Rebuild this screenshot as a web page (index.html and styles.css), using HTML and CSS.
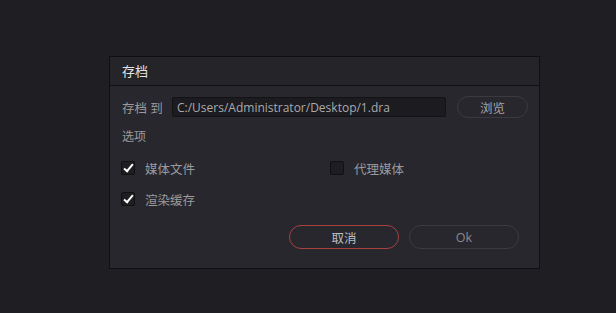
FILE: index.html
```html
<!DOCTYPE html>
<html lang="zh-CN">
<head>
    <meta charset="UTF-8">
    <title>存档</title>
    <link rel="stylesheet" href="styles.css">
</head>
<body>

<div class="dialog">
    <div class="dialog-title">存档</div>
    <div class="dialog-body">
        <div class="path-row">
            <span class="label">存档 到</span>
            <input type="text" class="path-input" value="C:/Users/Administrator/Desktop/1.dra">
            <button class="pill browse">浏览</button>
        </div>

        <div class="section">选项</div>

        <div class="options">
            <label class="option"><span class="box checked"></span>媒体文件</label>
            <label class="option"><span class="box"></span>代理媒体</label>
            <label class="option"><span class="box checked"></span>渲染缓存</label>
        </div>

        <div class="actions">
            <button class="pill cancel">取消</button>
            <button class="pill ok">Ok</button>
        </div>
    </div>
</div>

</body>
</html>
```

FILE: styles.css
```css
body {
    margin: 0;
    padding: 56px 0 0 109px;
    background-color: #1f1e23;
    font-family: "Open Sans", "Noto Sans CJK SC", sans-serif;
    font-size: 12px;
    color: #9b9b9e;
}

.dialog {
    width: 429px;
    height: 211px;
    border: 1px solid #101014;
    background-color: #28272d;
}

.dialog-title {
    height: 28px;
    line-height: 28px;
    padding-left: 12px;
    background-color: #252429;
    border-bottom: 1px solid #101014;
    color: #e2e2e4;
    font-size: 13px;
}

.dialog-body {
    padding: 10px 11px 0 12px;
}

.path-row {
    display: flex;
    align-items: center;
    height: 22px;
}

.label {
    width: 50px;
    font-size: 12.5px;
}

.path-input {
    width: 274px;
    height: 20px;
    box-sizing: border-box;
    margin: 0;
    padding: 0 4px;
    border: 1px solid #131316;
    border-radius: 2px;
    background-color: #1c1b20;
    color: #aaaaad;
    font-family: "Open Sans", "Noto Sans CJK SC", sans-serif;
    font-size: 12px;
}

.pill {
    box-sizing: border-box;
    height: 24px;
    margin: 0;
    padding: 0;
    border: 1px solid #3b3a40;
    border-radius: 12px;
    background-color: #28272d;
    color: #a5a5a8;
    font-family: "Open Sans", "Noto Sans CJK SC", sans-serif;
    font-size: 12.5px;
}

.browse {
    width: 71px;
    height: 22px;
    margin-left: 11px;
    border-radius: 11px;
}

.section {
    margin-top: 9px;
    height: 20px;
    line-height: 20px;
}

.options {
    display: grid;
    grid-template-columns: 209px 1fr;
    row-gap: 11px;
    margin-top: 11px;
}

.option {
    display: flex;
    align-items: center;
    height: 20px;
    font-size: 12.5px;
}

.box {
    width: 12px;
    height: 12px;
    margin: 0 10px 0 -1px;
    border: 1px solid #111114;
    border-radius: 2px;
    background-color: #1e1d22;
    position: relative;
}

.box.checked::after {
    content: "";
    position: absolute;
    left: 4px;
    top: 0px;
    width: 3px;
    height: 8px;
    border: solid #ffffff;
    border-width: 0 2px 2px 0;
    transform: rotate(40deg);
}

.actions {
    display: flex;
    justify-content: flex-end;
    gap: 10px;
    margin-top: 16px;
    padding-right: 9px;
}

.cancel,
.ok {
    width: 110px;
}

.cancel {
    border-color: #a8423f;
    color: #bdbdc0;
}

.ok {
    color: #8a8a8d;
}
```
